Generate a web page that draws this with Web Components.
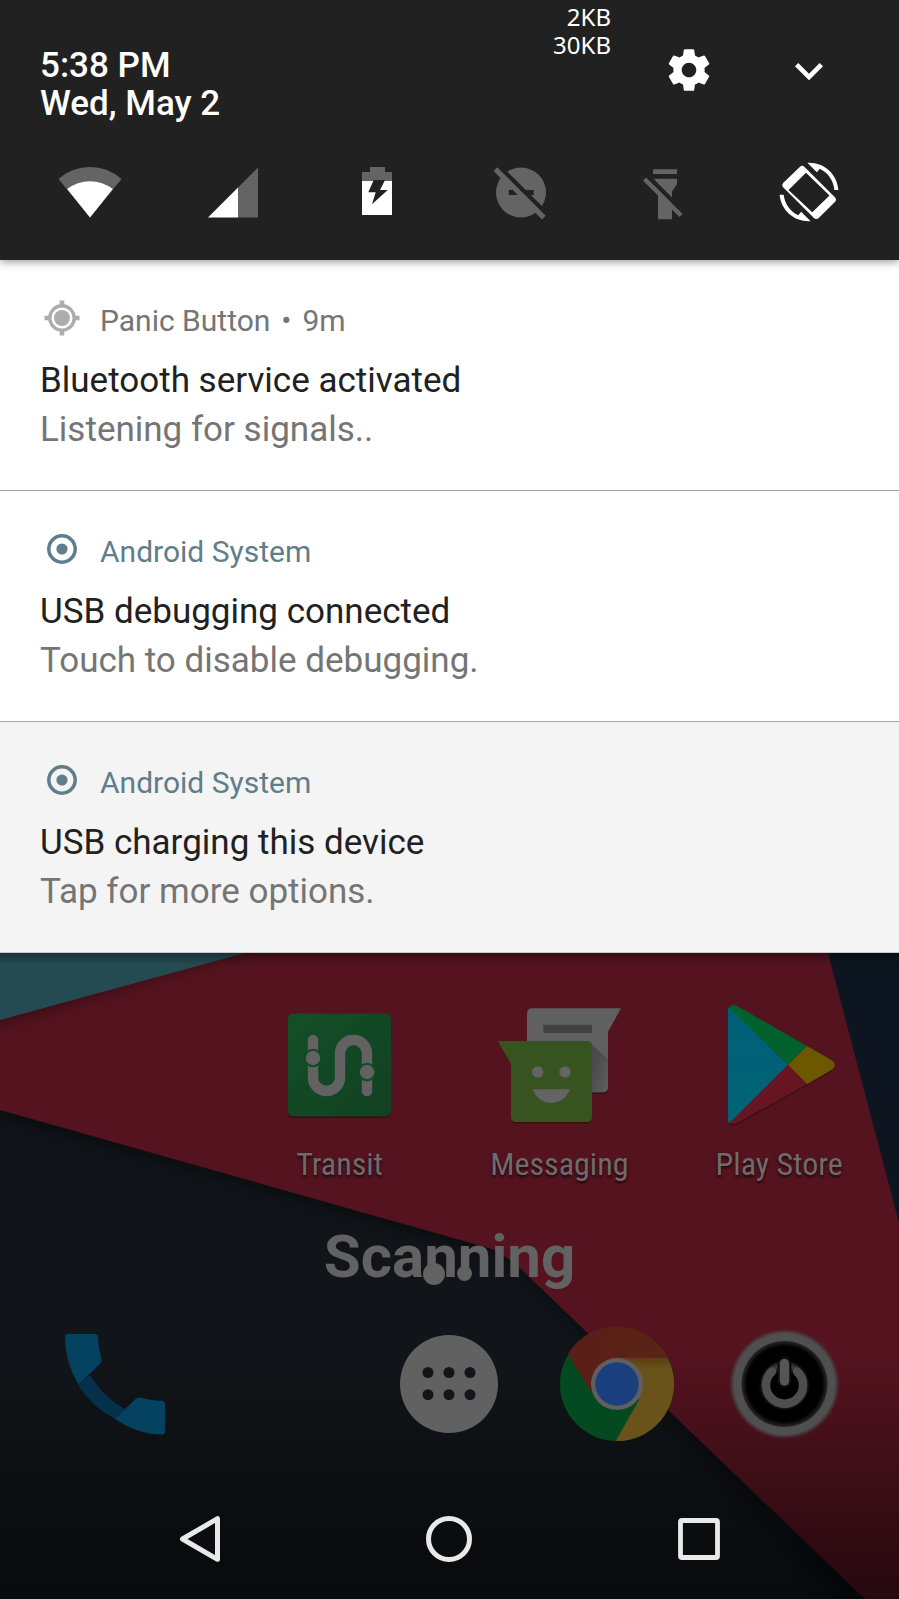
<!DOCTYPE html>
<html lang="en">
<head>
<meta charset="utf-8">
<meta name="viewport" content="width=device-width, initial-scale=1">
<title>Notification shade</title>
<style>
  html, body { margin: 0; min-height: 100%; background: #07090b; }
  body { font-family: Roboto, "Noto Sans", sans-serif; display: flex; flex-direction: column; min-height: 100vh; }
</style>
</head>
<body>
<phone-screen>
  <quick-header slot="header" time="5:38 PM" date="Wed, May 2"></quick-header>
  <note-card slot="notes" kind="target" age="9m">
    <span slot="app">Panic Button</span>
    <span slot="title">Bluetooth service activated</span>
    <span slot="text">Listening for signals..</span>
  </note-card>
  <note-card slot="notes" kind="system">
    <span slot="app">Android System</span>
    <span slot="title">USB debugging connected</span>
    <span slot="text">Touch to disable debugging.</span>
  </note-card>
  <note-card slot="notes" kind="system" low>
    <span slot="app">Android System</span>
    <span slot="title">USB charging this device</span>
    <span slot="text">Tap for more options.</span>
  </note-card>
  <home-screen></home-screen>
</phone-screen>

<script>
const icons = {
  wifi: `<svg viewBox="0 0 60 60"><path fill="#646464" d="M30 55.5-1.5 17A47.3 47.3 0 0 1 61.5 17Z"/><path fill="#fff" d="M30 55.5 7.2 27A37.5 37.5 0 0 1 52.8 27Z"/></svg>`,
  signal: `<svg viewBox="0 0 60 60"><path fill="#646464" d="M34 55.5H54V5.5L34 25.5Z"/><path fill="#fff" d="M4 55.5H34V25.5Z"/></svg>`,
  battery: `<svg viewBox="0 0 60 60"><path fill="#646464" d="M22 5H37V10H44V19H14V10H22Z"/><path fill="#fff" d="M14 19H44V53H14Z"/><path fill="#212121" d="M25.7 18H37L32 28H39.7L24 42.3 27.7 30.3H20.3Z"/></svg>`,
  dnd: `<svg viewBox="0 0 60 60"><circle cx="30" cy="30.5" r="25" fill="#646464"/><path fill="#212121" d="M17.7 28H42.7V33H17.7Z"/><path stroke="#646464" stroke-width="5.4" d="M4.5 7 53 55.5"/><path stroke="#212121" stroke-width="4.2" d="M4 .1 58 54.1"/></svg>`,
  torch: `<svg viewBox="0 0 60 60"><path fill="#646464" d="M18 7.3H42V12H18ZM18 16.7H42V22L37 29.5V57.3H23V29.5L18 22Z"/><path stroke="#212121" stroke-width="4.4" d="M14 15.5 42 43.5"/><path fill="#212121" d="M14 17.5H20L24 34 14 28Z"/><path stroke="#646464" stroke-width="4.4" d="M9.5 17 46 53.5"/></svg>`,
  rotate: `<svg viewBox="0 0 24 24"><path fill="#fff" fill-rule="evenodd" d="M16.3 2.7c3.27 1.55 5.45 4.6 5.85 8.5h1.6C23.24 4.84 18.29.3 12 .3l-.66.03 3.81 3.81 1.15-1.44zM10.23 1.95c-.59-.59-1.34-.59-1.92 0L1.75 8.31c-.59.59-.59 1.34 0 1.92l12.22 12.12c.59.59 1.34.59 1.92 0l6.46-6.36c.59-.59.59-1.34 0-1.92zM3.8 11.2 10.8 4.3 20.2 13.4 13.3 20.1ZM7.7 21.3C4.45 19.75 2.3 16.7 1.85 13.1H.25C.76 19.16 5.71 23.7 12 23.7l.66-.03-3.81-3.81-1.15 1.44z"/></svg>`,
  gear: `<svg viewBox="0 0 24 24"><path fill="#fff" d="M19.43 12.98c.04-.32.07-.64.07-.98s-.03-.66-.07-.98l2.11-1.65c.19-.15.24-.42.12-.64l-2-3.46c-.12-.22-.39-.3-.61-.22l-2.49 1c-.52-.4-1.08-.73-1.69-.98l-.38-2.65C14.46 2.18 14.25 2 14 2h-4c-.25 0-.46.18-.49.42l-.38 2.65c-.61.25-1.17.59-1.69.98l-2.49-1c-.23-.09-.49 0-.61.22l-2 3.46c-.13.22-.07.49.12.64l2.11 1.65c-.04.32-.07.65-.07.98s.03.66.07.98l-2.11 1.65c-.19.15-.24.42-.12.64l2 3.46c.12.22.39.3.61.22l2.49-1c.52.4 1.08.73 1.69.98l.38 2.65c.03.24.24.42.49.42h4c.25 0 .46-.18.49-.42l.38-2.65c.61-.25 1.17-.59 1.69-.98l2.49 1c.23.09.49 0 .61-.22l2-3.46c.12-.22.07-.49-.12-.64l-2.11-1.65zM12 15.5c-1.93 0-3.5-1.57-3.5-3.5s1.57-3.5 3.5-3.5 3.5 1.57 3.5 3.5-1.57 3.5-3.5 3.5z"/></svg>`,
  chevron: `<svg viewBox="0 0 24 24"><path fill="#fff" d="M16.59 8.59 12 13.17 7.41 8.59 6 10l6 6 6-6z"/></svg>`,
  target: `<svg viewBox="0 0 44 44"><g fill="none" stroke="#adadad"><path stroke-width="4.6" d="M22 4.5V10M22 34V39.5M4.5 22H10M34 22H39.5"/><circle cx="22" cy="22" r="12.2" stroke-width="3.4"/></g><circle cx="22" cy="22" r="8" fill="#adadad"/></svg>`,
  system: `<svg viewBox="0 0 44 44"><circle cx="22" cy="22" r="13.2" fill="none" stroke="#5f7d8a" stroke-width="3.5"/><circle cx="22" cy="22" r="5.6" fill="#5f7d8a"/></svg>`,
  transit: `<svg viewBox="0 0 130 130"><defs><linearGradient id="t" x1="0" y1="0" x2="1" y2="1"><stop offset="0" stop-color="#124f26"/><stop offset="1" stop-color="#124122"/></linearGradient></defs>
    <rect x="13" y="15" width="103" height="103" rx="6" fill="#000" opacity=".35"/><rect x="13" y="13.5" width="103" height="103" rx="6" fill="url(#t)"/>
    <path d="M38 40V77.5A13.5 13.5 0 0 0 65 77.5V53.5A13.5 13.5 0 0 1 92 53.5V91" fill="none" stroke="#626262" stroke-width="10.4" stroke-linecap="round"/>
    <g fill="#626262" stroke="#124a25" stroke-width="2"><circle cx="38" cy="58" r="8.2"/><circle cx="92" cy="72" r="8.2"/></g></svg>`,
  messaging: `<svg viewBox="0 0 130 130"><defs><linearGradient id="m" x1="0" y1="0" x2="1" y2="1"><stop offset=".3" stop-color="#444"/><stop offset="1" stop-color="#5f5f5f"/></linearGradient></defs>
    <path fill="#000" opacity=".3" d="M114 80V89Q114 94 109 94H92V80ZM17 112V117Q17 123 22 123.500H93Q98 123.500 98 117V112Z"/>
    <path fill="#606060" d="M38 8.300H127L114 31.700V87Q114 92.300 109 92.300H33V14Q33 8.300 38 8.300Z"/>
    <path fill="url(#m)" opacity=".8" d="M96 43 114 59V87Q114 92 109 92.300H96Z"/>
    <path fill="#414141" d="M49.300 24.700H98V33H49.300Z"/>
    <path fill="#375420" d="M3.700 41H93Q98 41 98 46V117Q98 122 93 122H22Q17 122 17 117V64Z"/>
    <g fill="#646464"><circle cx="43.700" cy="72" r="5.700"/><circle cx="71" cy="72" r="5.700"/><path d="M38.500 89.300H76Q70 103 57.300 103T38.500 89.300Z"/></g></svg>`,
  play: `<svg viewBox="0 0 130 130"><defs><linearGradient id="p" x1="0" y1="0" x2="0" y2="1"><stop offset="0" stop-color="#005f77"/><stop offset="1" stop-color="#006375"/></linearGradient></defs>
    <path fill="#000" opacity=".25" d="M15 124Q18 127 23 125L117 72 120 66 74 68Z"/>
    <path fill="url(#p)" d="M14 9Q15 6 17 8L74 65 17 122Q14 124 14 121Z"/>
    <path fill="#00612c" d="M15 7.500Q18 3.500 23 6L93 46 74 65Z"/>
    <path fill="#6b5800" d="M93 46 116.500 59.500Q125 65 116.500 70.500L93 84.300 74 65Z"/>
    <path fill="#661521" d="M74 65 93 84.300 22 123.500Q18 125 15.500 123Z"/></svg>`,
  phone: `<svg viewBox="0 0 120 120"><path fill="#04304b" d="M36 51Q50 74 71 85L61 95Q38 83 24 61Z"/><path fill="#05425f" d="M14 10H41Q44 10 44 13 44.300 25 47.700 36 47.700 38 46 40L24.500 60.500Q11 38 11 13 11 10 14 10ZM61 94.700 82 74.500Q84 73 86 73.500 96 76.500 108 76.700 111 77 111 80V107.500Q111 110.500 108 110.500 82 110 61 94.700Z"/></svg>`,
  apps: `<svg viewBox="0 0 120 120"><circle cx="60" cy="60" r="49" fill="#616161"/><g fill="#12161a"><circle cx="39" cy="48.500" r="5.500"/><circle cx="60" cy="48.500" r="5.500"/><circle cx="81" cy="48.500" r="5.500"/><circle cx="39" cy="70.700" r="5.500"/><circle cx="60" cy="70.700" r="5.500"/><circle cx="81" cy="70.700" r="5.500"/></g></svg>`,
  chrome: `<svg viewBox="0 0 120 120"><defs><linearGradient id="c" x1="0" y1="0" x2="1" y2="0"><stop offset="0" stop-color="#5b1d18"/><stop offset="1" stop-color="#5a2414"/></linearGradient><linearGradient id="y" x1="0" y1="0" x2="0" y2="1"><stop offset="0" stop-color="#5c3c14"/><stop offset=".15" stop-color="#69531b"/><stop offset="1" stop-color="#69531b"/></linearGradient></defs>
    <circle cx="60" cy="60" r="57" fill="#044a21"/>
    <path fill="url(#y)" d="M60 33.500H110.500A57 57 0 0 1 58.700 117L82 76Z"/>
    <path fill="url(#c)" d="M11 30A57 57 0 0 1 110.500 33.500H60L34.500 68.500Z"/>
    <circle cx="60" cy="60" r="26" fill="#5f5f5f"/><circle cx="60" cy="60" r="21.700" fill="#1b3e7c"/></svg>`,
  power: `<svg viewBox="0 0 120 120"><defs><filter id="b" x="-20%" y="-20%" width="140%" height="140%"><feGaussianBlur stdDeviation="1.500"/></filter></defs>
    <circle cx="59.500" cy="60" r="53" fill="#484848" filter="url(#b)"/><circle cx="59.500" cy="60" r="51" fill="#4f4f4f"/>
    <circle cx="59.500" cy="60" r="43" fill="#222"/><circle cx="59.500" cy="60" r="40" fill="#000" filter="url(#b)"/>
    <circle cx="59.500" cy="61" r="20" fill="#000" stroke="#3a3a3a" stroke-width="6" filter="url(#b)"/>
    <path d="M47 47.500A18.500 18.500 0 1 0 72 47.500" fill="none" stroke="#4e4e4e" stroke-width="8.500" stroke-linecap="round"/>
    <path d="M59.500 39V57" stroke="#0c0c0c" stroke-width="14" stroke-linecap="round"/><path d="M59.500 39.500V57" stroke="#555" stroke-width="9.500" stroke-linecap="round"/></svg>`,
  back: `<svg viewBox="0 0 48 48"><path d="M41.500 3.700V44.300L6.500 24Z" fill="none" stroke="#e9e9e9" stroke-width="5" stroke-linejoin="round"/></svg>`,
  home: `<svg viewBox="0 0 48 48"><circle cx="24" cy="24" r="20.500" fill="none" stroke="#e9e9e9" stroke-width="5"/></svg>`,
  recents: `<svg viewBox="0 0 48 48"><rect x="5.500" y="5.500" width="37" height="37" rx="1.500" fill="none" stroke="#e9e9e9" stroke-width="4.800"/></svg>`
};

const base = `<style>
  *, *::before { box-sizing: border-box; }
  svg { display: block; width: 100%; height: 100%; overflow: visible; fill: none; }
  button { border: 0; padding: 0; margin: 0; background: none; font: inherit; color: inherit; }
  a { color: inherit; text-decoration: none; }
</style>`;

class ShadowElement extends HTMLElement {
  connectedCallback() {
    if (this.shadowRoot) return;
    this.attachShadow({ mode: 'open' }).innerHTML = base + this.view();
  }
}

/* Stacks the quick-settings header, the notifications and the home screen. */
customElements.define('phone-screen', class extends ShadowElement {
  view() {
    return `<style>
      :host { display: flex; flex-direction: column; flex: 1; }
      main { display: flex; flex-direction: column; }
      ::slotted(home-screen) { flex: 1; }
    </style>
    <slot name="header"></slot><main><slot name="notes"></slot></main><slot></slot>`;
  }
});

customElements.define('quick-header', class extends ShadowElement {
  view() {
    const tiles = [['wifi', 'Wi-Fi'], ['signal', 'Mobile signal'], ['battery', 'Battery'],
      ['dnd', 'Do not disturb'], ['torch', 'Flashlight'], ['rotate', 'Auto-rotate']];
    return `<style>
      :host { display: block; position: relative; z-index: 1; background: #212121; color: #fff; box-shadow: 0 2px 8px rgba(0,0,0,.4); }
      .top { display: flex; align-items: flex-start; padding: 0 62px 0 40px; height: 162px; }
      .clock { flex: 1; padding-top: 47px; font-size: 35px; font-weight: 500; line-height: 38px; }
      .net { padding-top: 3px; font: 24px/28px "Noto Sans", sans-serif; text-align: right; margin-right: 53px; }
      .gear { width: 50px; height: 50px; margin: 45px 67px 0 0; }
      .more { width: 56px; height: 56px; margin-top: 43px; }
      .tiles { display: flex; justify-content: space-between; padding: 0 60px 38px; }
      .tiles button { width: 60px; height: 60px; }
    </style>
    <div class="top">
      <div class="clock"><div>${this.getAttribute('time')}</div><div>${this.getAttribute('date')}</div></div>
      <div class="net">2KB<br>30KB</div>
      <button class="gear" aria-label="Settings">${icons.gear}</button>
      <button class="more" aria-label="Expand">${icons.chevron}</button>
    </div>
    <div class="tiles">${tiles.map(([k, l]) => `<button aria-label="${l}">${icons[k]}</button>`).join('')}</div>`;
  }
});

customElements.define('note-card', class extends ShadowElement {
  view() {
    const kind = this.getAttribute('kind'), age = this.getAttribute('age');
    return `<style>
      :host { display: block; background: #fff; border-bottom: 1px solid #a6a6a6; padding: 36px 40px; }
      :host([low]) { background: #f4f4f4; border-color: #c9c9c9; }
      header { display: flex; align-items: center; gap: 16px; font-size: 30px; line-height: 36px; color: ${kind === 'system' ? '#5f7d8a' : '#757575'}; }
      .icon { width: 44px; height: 44px; }
      .name { display: flex; gap: 11px; padding-top: 5px; }
      .title, .text { font-size: 35px; line-height: 49px; }
      .title { margin-top: 16px; color: #212121; }
      .text { color: #757575; }
    </style>
    <header><div class="icon">${icons[kind]}</div><div class="name"><slot name="app"></slot>${age ? `<span>•</span><span>${age}</span>` : ''}</div></header>
    <div class="title"><slot name="title"></slot></div>
    <div class="text"><slot name="text"></slot></div>`;
  }
});

customElements.define('app-icon', class extends ShadowElement {
  view() {
    return `<style>
      :host { display: block; }
      a { display: flex; flex-direction: column; align-items: center; gap: 14px; }
      .art { width: var(--art, 130px); height: var(--art, 130px); }
      .label { font: 32px/40px "Roboto Condensed", Roboto, sans-serif; color: #706a6c; text-shadow: 0 2px 3px rgba(0,0,0,.7); white-space: nowrap; }
      .label:empty { display: none; }
    </style>
    <a href="#" aria-label="${this.getAttribute('name')}"><div class="art">${icons[this.getAttribute('art')]}</div><div class="label">${this.hasAttribute('bare') ? '' : this.getAttribute('name')}</div></a>`;
  }
});

customElements.define('home-screen', class extends ShadowElement {
  view() {
    return `<style>
      :host { display: flex; flex-direction: column; position: relative; overflow: hidden; background: #111519; }
      .wall { position: absolute; inset: 0; }
      .apps, .status, .dock, nav { position: relative; }
      .apps { display: grid; grid-template-columns: repeat(4, 1fr); padding: 47px 10px 0; }
      .apps :first-child { grid-column: 2; }
      .status { align-self: center; margin-top: 38px; font-size: 60px; line-height: 70px; font-weight: 700; color: #626262; }
      .dot { position: absolute; border-radius: 50%; background: #626262; }
      .big { width: 22px; height: 22px; left: 99px; top: 41px; }
      .small { width: 15px; height: 15px; left: 133px; top: 44px; }
      .dock { display: grid; grid-template-columns: repeat(5, 1fr); padding: 0 30px; margin-top: 32px; --art: 120px; }
      .dock :nth-child(2) { grid-column: 3; }
      nav { display: grid; grid-template-columns: repeat(3, 1fr); justify-items: center; margin-top: auto; padding: 0 75px 36px; }
      nav button { width: 48px; height: 48px; }
    </style>
    <div class="wall"><svg viewBox="0 0 899 646" preserveAspectRatio="none" aria-hidden="true">
      <defs>
        <filter id="s" x="-10%" y="-10%" width="120%" height="130%"><feGaussianBlur stdDeviation="9"/></filter>
        <linearGradient id="d" x1="0" y1="0" x2="0" y2="1"><stop offset=".62" stop-color="#000" stop-opacity="0"/><stop offset="1" stop-color="#000" stop-opacity=".55"/></linearGradient>
        <linearGradient id="e" x1="0" y1="0" x2="0" y2="1"><stop offset="0" stop-color="#000" stop-opacity=".35"/><stop offset="1" stop-color="#000" stop-opacity="0"/></linearGradient>
      </defs>
      <path fill="#111519" d="M0 0H899V646H0Z"/>
      <path fill="#000" opacity=".35" filter="url(#s)" d="M-30 0H899V690H880L524 322Q506 306 488 302L0 166Z"/>
      <path fill="#54131f" d="M0 0H899V646H865L524 319Q506 302 492 296L0 157Z"/>
      <path fill="#0d1620" d="M828 0H899V270Z"/>
      <path fill="#000" opacity=".6" filter="url(#s)" d="M-30-10H255L-30 75Z"/>
      <path fill="#254b52" d="M0 0H245L0 67Z"/>
      <path fill="url(#d)" d="M0 0H899V646H0Z"/>
      <path fill="url(#e)" d="M0 0H899V12H0Z"/>
    </svg></div>
    <div class="apps">
      <app-icon art="transit" name="Transit"></app-icon>
      <app-icon art="messaging" name="Messaging"></app-icon>
      <app-icon art="play" name="Play Store"></app-icon>
    </div>
    <div class="status">Scanning<span class="dot big"></span><span class="dot small"></span></div>
    <div class="dock">
      <app-icon bare art="phone" name="Phone"></app-icon>
      <app-icon bare art="apps" name="All apps"></app-icon>
      <app-icon bare art="chrome" name="Chrome"></app-icon>
      <app-icon bare art="power" name="Power"></app-icon>
    </div>
    <nav>
      <button aria-label="Back">${icons.back}</button>
      <button aria-label="Home">${icons.home}</button>
      <button aria-label="Recent apps">${icons.recents}</button>
    </nav>`;
  }
});
</script>
</body>
</html>
